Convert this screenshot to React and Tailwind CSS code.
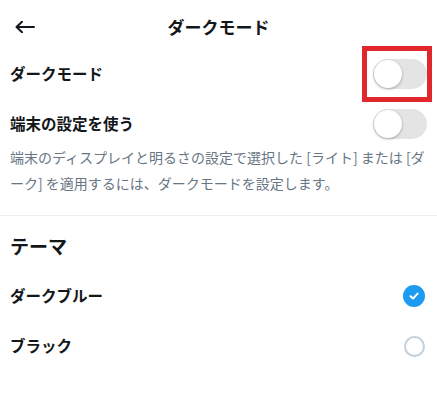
import React from "react";

const font = { fontFamily: '"Noto Sans CJK JP", "Noto Sans", sans-serif' };

const Toggle = () => (
    <div className="relative w-[54px] h-[30px] rounded-full bg-[#e4e4e4]">
        <div className="absolute left-[1px] top-[1px] w-[28px] h-[28px] rounded-full bg-white shadow-[0_1px_3px_rgba(0,0,0,0.3)]" />
    </div>
);

const Checked = () => (
    <div className="w-[22px] h-[22px] rounded-full bg-[#1d9bf0] flex items-center justify-center">
        <svg width="12" height="12" viewBox="0 0 12 12" fill="none">
            <path
                d="M2.5 6.3 L5 8.6 L9.6 3.6"
                stroke="white"
                strokeWidth="2"
                strokeLinecap="round"
                strokeLinejoin="round"
            />
        </svg>
    </div>
);

const Empty = () => (
    <div className="w-[21px] h-[21px] rounded-full border-2 border-[#c3d0d9]" />
);

export default function App() {
    return (
        <div
            className="w-[437px] h-[401px] bg-white text-[#14171a] overflow-hidden"
            style={font}
        >
            {/* Header */}
            <header className="relative h-[49px] pt-[5px] flex items-center justify-center">
                <div className="absolute left-[15px] top-[21px]">
                    <svg width="20" height="12" viewBox="0 0 20 12" fill="none">
                        <path
                            d="M19 6 H1.5 M7 0.8 L1.5 6 L7 11.2"
                            stroke="#14171a"
                            strokeWidth="2"
                            strokeLinecap="round"
                            strokeLinejoin="round"
                        />
                    </svg>
                </div>
                <h1 className="text-[17px] font-bold">ダークモード</h1>
            </header>

            {/* Dark mode toggle */}
            <div className="h-[50px] flex items-center justify-between pl-[10px] pr-[10px]">
                <span className="text-[15.5px] font-semibold">ダークモード</span>
                <div className="relative">
                    <Toggle />
                    <div className="absolute -left-[11px] -right-[5px] -top-[13px] -bottom-[13px] border-[5px] border-[#e0282c] pointer-events-none" />
                </div>
            </div>

            {/* Use device setting */}
            <div className="h-[45px] pt-[5px] flex items-center justify-between pl-[10px] pr-[10px]">
                <span className="text-[15.5px] font-semibold">端末の設定を使う</span>
                <Toggle />
            </div>
            <p className="px-[10px] text-[14px] leading-[26px] text-[#687684] whitespace-nowrap">
                <span className="block">
                    端末のディスプレイと明るさの設定で選択した [ライト] または [ダ
                </span>
                <span className="block">
                    ーク] を適用するには、ダークモードを設定します。
                </span>
            </p>

            <div className="mt-[19px] h-px bg-[#e9eef1]" />

            {/* Theme */}
            <h2 className="pt-[15px] pl-[10px] h-[45px] leading-[30px] text-[19px] font-bold">
                テーマ
            </h2>
            <div className="mt-[10px] h-[50px] flex items-center justify-between pl-[10px] pr-[12px]">
                <span className="text-[15.5px] font-semibold">ダークブルー</span>
                <Checked />
            </div>
            <div className="h-[50px] flex items-center justify-between pl-[10px] pr-[12px]">
                <span className="text-[15.5px] font-semibold">ブラック</span>
                <Empty />
            </div>
        </div>
    );
}
